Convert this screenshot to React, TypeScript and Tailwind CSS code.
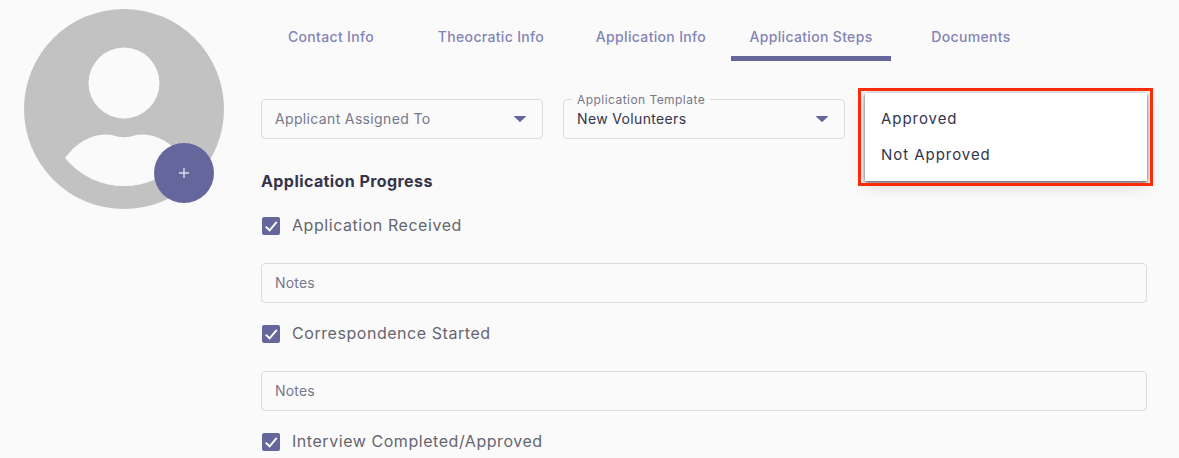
import { ReactNode } from "react";

const tabs = ["Contact Info", "Theocratic Info", "Application Info", "Application Steps", "Documents"];

function Caret() {
  return (
    <svg width="12" height="6" viewBox="0 0 12 6" className="shrink-0">
      <path d="M0.5 0h11a.5 .5 0 0 1 .3 .8L6.4 5.8a.6 .6 0 0 1-.8 0L.2 .8A.5 .5 0 0 1 .5 0z" fill="#64669c" />
    </svg>
  );
}

function SelectBox({ label, value }: { label: string; value?: string }) {
  return (
    <div className="relative flex h-10 items-center justify-between rounded border border-[#dcdcdc] pl-[13px] pr-4">
      {value ? (
        <>
          <span className="absolute -top-[8px] left-[8px] bg-[#fafafa] px-[5px] text-xs leading-[16px] tracking-[0.45px] text-[#77778c]">
            {label}
          </span>
          <span className="text-sm tracking-[0.35px] text-[#35354a]">{value}</span>
        </>
      ) : (
        <span className="text-sm tracking-[0.35px] text-[#77778c]">{label}</span>
      )}
      <Caret />
    </div>
  );
}

function NotesInput() {
  return (
    <div className="flex h-10 items-center rounded border border-[#dcdcdc] pl-[13px] text-sm tracking-[0.2px] text-[#77778c]">
      Notes
    </div>
  );
}

function CheckRow({ children }: { children: ReactNode }) {
  return (
    <div className="flex h-[18px] items-center gap-[12px] pl-px">
      <span className="flex size-[18px] items-center justify-center rounded-[2px] bg-[#64669c]">
        <svg width="18" height="18" viewBox="0 0 18 18" fill="none">
          <path d="M3.7 9.6l3.9 3.7L14.8 4.8" stroke="#fff" strokeWidth="1.9" />
        </svg>
      </span>
      <span className="-mt-[2px] text-base tracking-[0.55px] text-[#666670]">{children}</span>
    </div>
  );
}

export default function App() {
  return (
    <div className="flex h-[458px] w-[1179px] overflow-hidden bg-[#fafafa] font-['Inter',sans-serif]">
      <div className="pl-6 pt-[9px]">
        <div className="relative size-[200px]">
          <svg width="200" height="200" viewBox="0 0 200 200">
            <circle cx="100" cy="100" r="100" fill="#c2c2c2" />
            <circle cx="100" cy="74" r="35.5" fill="#fafafa" />
            <path
              d="M41 149C54 131 72 123 88 126C96 129 104 129 112 126C128 123 146 131 159 149A76 76 0 0 1 41 149Z"
              fill="#fafafa"
            />
          </svg>
          <div className="absolute left-[130px] top-[134px] flex size-[60px] items-center justify-center rounded-full bg-[#64669c]">
            <svg width="12" height="12" viewBox="0 0 12 12">
              <path d="M6 1v10M1 6h10" stroke="#dcdcec" strokeWidth="1.4" />
            </svg>
          </div>
        </div>
      </div>

      <div className="ml-[37px] w-[886px]">
        <div className="-ml-[10px] flex h-[61px] items-start">
          {tabs.map((tab) => (
            <div
              key={tab}
              className={
                tab === "Application Steps"
                  ? "flex h-[61px] w-[160px] items-start justify-center border-b-[5px] border-[#64669c] pt-[27px]"
                  : "flex h-[61px] w-[160px] items-start justify-center pt-[27px]"
              }
            >
              <span className="text-sm leading-5 font-medium tracking-[0.33px] text-[#8384b5]">{tab}</span>
            </div>
          ))}
        </div>

        <div className="mt-[38px] grid grid-cols-3 gap-x-5">
          <SelectBox label="Applicant Assigned To" />
          <SelectBox label="Application Template" value="New Volunteers" />
          <div className="relative h-10">
            <div className="absolute -top-[6px] left-0 flex h-[88px] w-[282px] flex-col justify-center gap-[14px] bg-white pl-4 shadow-[0_2px_3px_rgba(0,0,0,0.45),0_0_5px_rgba(0,0,0,0.25),0_6px_16px_rgba(0,0,0,0.12)]">
              <span className="text-[15px] leading-[22px] tracking-[0.95px] text-[#35354a]">Approved</span>
              <span className="text-[15px] leading-[22px] tracking-[0.95px] text-[#35354a]">Not Approved</span>
            </div>
            <div className="absolute -left-[7px] -top-[11px] h-[98px] w-[295px] border-[3px] border-[#ff2a0a]" />
          </div>
        </div>

        <h2 className="mt-[30px] text-base leading-6 font-bold tracking-[0.42px] text-[#35354a]">Application Progress</h2>

        <div className="mt-[24px] flex flex-col">
          <CheckRow>Application Received</CheckRow>
          <div className="mt-[28px]">
            <NotesInput />
          </div>
          <div className="mt-[22px]">
            <CheckRow>Correspondence Started</CheckRow>
          </div>
          <div className="mt-[28px]">
            <NotesInput />
          </div>
          <div className="mt-[22px]">
            <CheckRow>Interview Completed/Approved</CheckRow>
          </div>
        </div>
      </div>
    </div>
  );
}
